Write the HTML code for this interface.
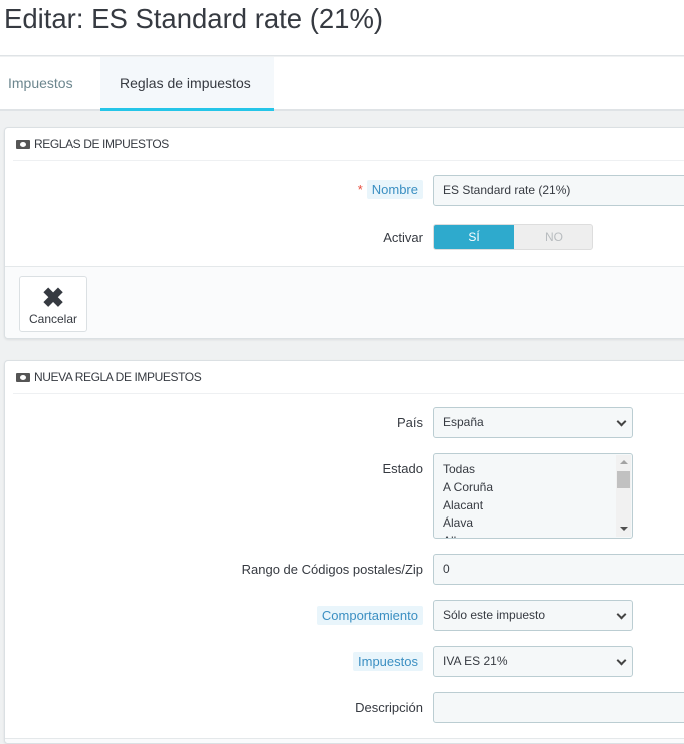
<!DOCTYPE html>
<html><head><meta charset="utf-8"><style>
*{box-sizing:border-box;margin:0;padding:0}
html{width:684px;height:744px;overflow:hidden}
body{width:684px;height:744px;overflow:hidden;background:#eff1f2;font-family:"Liberation Sans",sans-serif;font-size:13px;color:#363a41;position:relative}
.a{position:absolute}
.hdr{left:0;top:0;width:684px;height:56px;background:#fff;border-bottom:1px solid #dfe3e6}
.title{left:4px;top:3px;font-size:27.5px;color:#363a41}
.tabs{left:0;top:57px;width:684px;height:54px;background:#fff;border-bottom:2px solid #dfe3e6}
.tab{top:0;height:54px;line-height:52px;font-size:14px}
.panel{left:4px;width:700px;background:#fff;border:1px solid #dbe0e3;border-radius:4px;box-shadow:0 1px 2px rgba(0,0,0,.08);overflow:hidden}
.ph{left:8px;height:33px;width:690px;border-bottom:1px solid #eef0f2;font-size:12px;line-height:32px;padding-left:3px;color:#363a41;letter-spacing:-0.4px}
.ico{display:inline-block;width:14px;height:9px;background:#555;border-radius:1px;vertical-align:-1px;margin-right:4px;position:relative}
.ico:after{content:"";position:absolute;left:4px;top:2px;width:6px;height:5px;background:#fff;border-radius:50%}
.lbl{right:261px;text-align:right;font-size:13px;color:#363a41}
.pill{background:#e9f5fb;color:#3b8fc2;padding:2px 5px;border-radius:2px}
.in{left:433px;height:31px;background:#f5f8f9;border:1px solid #bbcdd2;border-radius:3px;font-size:12px;line-height:29px;padding-left:9px;color:#363a41}
.sel:after{content:"";position:absolute;right:7px;top:10px;width:5px;height:5px;border-right:2px solid #444;border-bottom:2px solid #444;transform:rotate(45deg)}
</style></head><body>
<div class="a hdr"></div>
<div class="a title">Editar: ES Standard rate (21%)</div>
<div class="a tabs">
 <div class="a tab" style="left:8px;color:#6c868e">Impuestos</div>
 <div class="a" style="left:100px;top:0;width:174px;height:54px;background:#f4f8fb;border-bottom:3px solid #25c5e8"></div>
 <div class="a tab" style="left:120px;color:#363a41">Reglas de impuestos</div>
</div>

<div class="a panel" style="top:127px;height:212px">
 <div class="a ph" style="top:0"><span class="ico"></span>REGLAS DE IMPUESTOS</div>
 <div class="a" style="left:0;top:138px;width:700px;height:73px;background:#fafbfc;border-top:1px solid #e4e8ea"></div>
 <div class="a" style="left:14px;top:148px;width:68px;height:56px;background:#fff;border:1px solid #dbe0e3;border-radius:3px;text-align:center;font-size:12px">
  <div style="font-size:27px;font-weight:bold;line-height:28px;margin-top:7px;color:#363a41">✖</div>
  <div style="line-height:14px">Cancelar</div>
 </div>
</div>
<div class="a lbl" style="top:182px"><span style="color:#e74c3c;margin-right:4px">*</span><span class="pill">Nombre</span></div>
<div class="a in" style="top:175px;width:260px">ES Standard rate (21%)</div>
<div class="a lbl" style="top:230px">Activar</div>
<div class="a" style="left:433px;top:224px;width:160px;height:26px;border-radius:3px;background:#eee;border:1px solid #ddd;overflow:hidden;font-size:12px;line-height:24px">
 <div class="a" style="left:0;top:0;width:80px;height:24px;background:#2eaacd;color:#fff;text-align:center">SÍ</div>
 <div class="a" style="left:80px;top:0;width:80px;height:24px;color:#b8bcbf;text-align:center">NO</div>
</div>

<div class="a panel" style="top:360px;height:384px">
 <div class="a ph" style="top:0"><span class="ico"></span>NUEVA REGLA DE IMPUESTOS</div>
 <div class="a" style="left:0;top:377px;width:700px;height:42px;background:#fafbfc;border-top:1px solid #e4e8ea"></div>
</div>
<div class="a lbl" style="top:415px">País</div>
<div class="a in sel" style="top:407px;width:200px">España</div>
<div class="a lbl" style="top:461px">Estado</div>
<div class="a in" style="top:453px;width:200px;height:86px;line-height:18px;padding-top:6px;overflow:hidden">Todas<br>A Coruña<br>Alacant<br>Álava<br>Alb</div>
<div class="a" style="left:616px;top:455px;width:15px;height:82px;background:#f1f1f1"></div>
<div class="a" style="left:617px;top:471px;width:13px;height:17px;background:#c1c1c1"></div>
<div class="a" style="left:620px;top:460px;width:0;height:0;border-left:4px solid transparent;border-right:4px solid transparent;border-bottom:4px solid #a3a3a3"></div>
<div class="a" style="left:620px;top:527px;width:0;height:0;border-left:4px solid transparent;border-right:4px solid transparent;border-top:4px solid #505050"></div>
<div class="a lbl" style="top:562px">Rango de Códigos postales/Zip</div>
<div class="a in" style="top:554px;width:260px">0</div>
<div class="a lbl" style="top:608px"><span class="pill">Comportamiento</span></div>
<div class="a in sel" style="top:600px;width:200px">Sólo este impuesto</div>
<div class="a lbl" style="top:654px"><span class="pill">Impuestos</span></div>
<div class="a in sel" style="top:646px;width:200px">IVA ES 21%</div>
<div class="a lbl" style="top:700px">Descripción</div>
<div class="a in" style="top:692px;width:260px"></div>
</body></html>
